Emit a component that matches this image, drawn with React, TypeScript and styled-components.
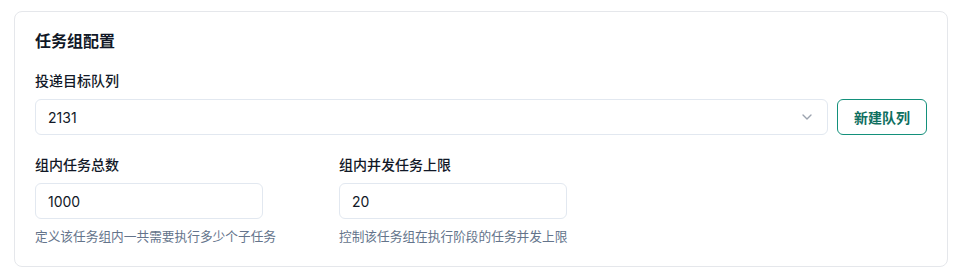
import React from 'react';
import styled, { createGlobalStyle } from 'styled-components';
import { ChevronDown } from 'lucide-react';

const GlobalStyle = createGlobalStyle`
  html, body {
    margin: 0;
    padding: 0;
    background: #ffffff;
  }
  body {
    font-family: Inter, "Noto Sans CJK SC", sans-serif;
    color: #111827;
  }
`;

const Page = styled.div`
  padding: 11px 17px 0 14px;
`;

const Card = styled.section`
  border: 1px solid #e5e7eb;
  border-radius: 8px;
  padding: 17px 20px 19px;
`;

const Title = styled.h3`
  margin: 0 0 18px;
  font-size: 16px;
  line-height: 24px;
  font-weight: 600;
  color: #111827;
`;

const Label = styled.div`
  font-size: 14px;
  line-height: 20px;
  font-weight: 500;
  color: #111827;
  margin-bottom: 8px;
`;

const QueueRow = styled.div`
  display: flex;
  gap: 9px;
  margin-bottom: 20px;
`;

const Select = styled.div`
  flex: 1;
  height: 36px;
  box-sizing: border-box;
  border: 1px solid #e2e8f0;
  border-radius: 6px;
  display: flex;
  align-items: center;
  justify-content: space-between;
  padding: 0 12px 0 12px;
  font-size: 14px;
  color: #111827;
`;

const OutlineButton = styled.button`
  height: 36px;
  box-sizing: border-box;
  padding: 0 16px;
  border: 1px solid #13907b;
  border-radius: 6px;
  background: #ffffff;
  color: #0f6f5f;
  font-family: inherit;
  font-size: 14px;
  font-weight: 600;
  cursor: pointer;
`;

const FieldGrid = styled.div`
  display: grid;
  grid-template-columns: 280px 280px;
  column-gap: 24px;
`;

const Field = styled.div`
  display: flex;
  flex-direction: column;
`;

const Input = styled.input`
  width: 228px;
  height: 36px;
  box-sizing: border-box;
  border: 1px solid #e2e8f0;
  border-radius: 6px;
  padding: 0 12px;
  font-family: inherit;
  font-size: 14px;
  color: #111827;
  outline: none;
`;

const Help = styled.div`
  margin-top: 8px;
  font-size: 12.7px;
  line-height: 20px;
  color: #64748b;
`;

const fields = [
  { label: '组内任务总数', value: '1000', help: '定义该任务组内一共需要执行多少个子任务' },
  { label: '组内并发任务上限', value: '20', help: '控制该任务组在执行阶段的任务并发上限' },
];

export default function App() {
  return (
    <>
      <GlobalStyle />
      <Page>
        <Card>
          <Title>任务组配置</Title>
          <Label>投递目标队列</Label>
          <QueueRow>
            <Select>
              <span>2131</span>
              <ChevronDown size={16} color="#9ca3af" strokeWidth={2} />
            </Select>
            <OutlineButton>新建队列</OutlineButton>
          </QueueRow>
          <FieldGrid>
            {fields.map((f) => (
              <Field key={f.label}>
                <Label>{f.label}</Label>
                <Input defaultValue={f.value} />
                <Help>{f.help}</Help>
              </Field>
            ))}
          </FieldGrid>
        </Card>
      </Page>
    </>
  );
}
